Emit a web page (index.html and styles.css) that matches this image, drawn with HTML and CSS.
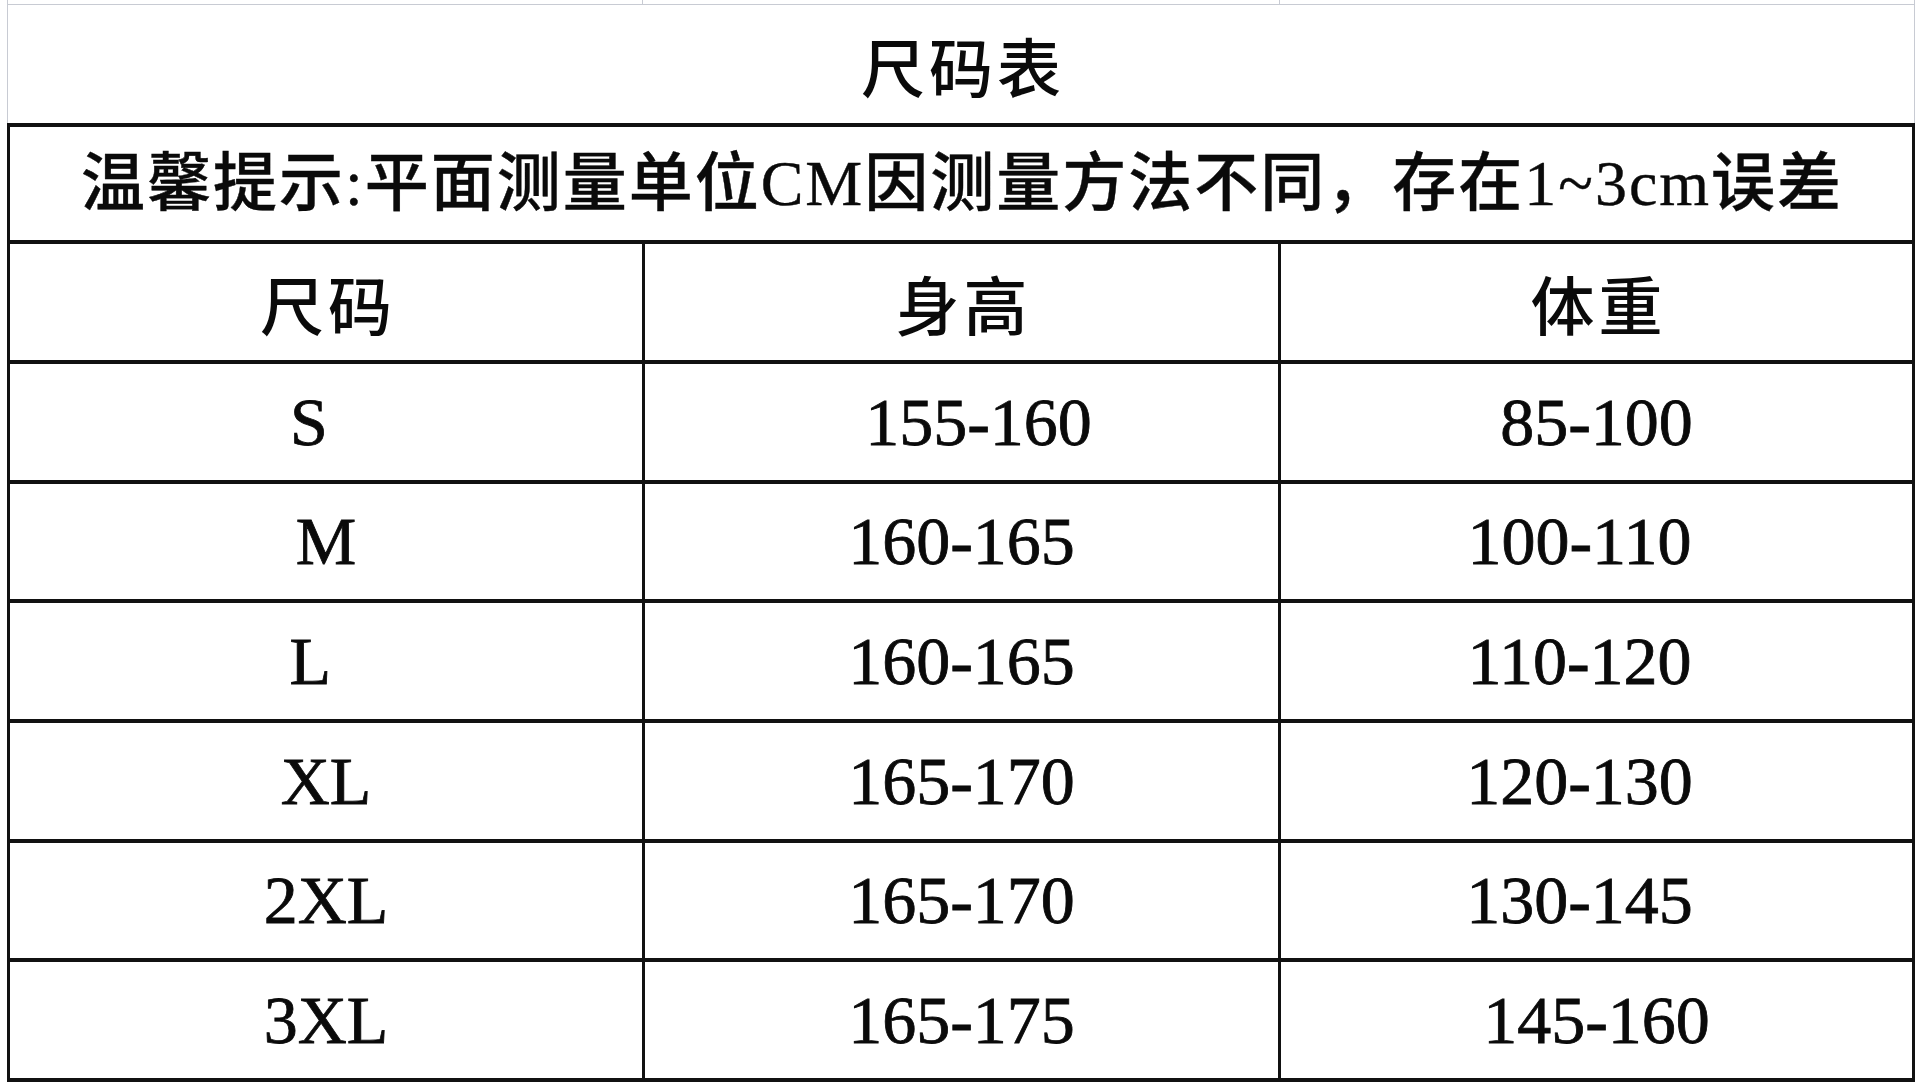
FILE: index.html
```html
<!DOCTYPE html>
<html lang="zh-CN">
<head>
<meta charset="utf-8">
<title>尺码表</title>
<link rel="stylesheet" href="styles.css">
</head>
<body>
<div class="sheet">
  <div class="gridline"><span></span><span></span><span></span></div>
  <div class="title">尺码表</div>
  <div class="chart">
    <div class="cell notice">温馨提示:平面测量单位CM因测量方法不同，存在1~3cm误差</div>

    <div class="cell head">尺码</div>
    <div class="cell head">身高</div>
    <div class="cell head">体重</div>

    <div class="cell num">S  </div>
    <div class="cell num">  155-160</div>
    <div class="cell num">85-100</div>

    <div class="cell num">M</div>
    <div class="cell num">160-165</div>
    <div class="cell num">100-110  </div>

    <div class="cell num">L  </div>
    <div class="cell num">160-165</div>
    <div class="cell num">110-120  </div>

    <div class="cell num">XL</div>
    <div class="cell num">165-170</div>
    <div class="cell num">120-130  </div>

    <div class="cell num">2XL</div>
    <div class="cell num">165-170</div>
    <div class="cell num">130-145  </div>

    <div class="cell num">3XL</div>
    <div class="cell num">165-175</div>
    <div class="cell num">145-160</div>
  </div>
</div>
</body>
</html>
```
FILE: styles.css
```css
html, body {
  margin: 0;
  padding: 0;
  background: #ffffff;
}

body {
  color: #0a0a0a;
  font-family: "Liberation Serif", "Noto Sans CJK SC", serif;
}

.sheet {
  margin-left: 7px;
  width: 1908px;
}

.gridline {
  display: grid;
  grid-template-columns: 636px 637px 635px;
  height: 4px;
  border-bottom: 1px solid #c8cbd3;
}

.gridline span {
  border-right: 1px solid #c8cbd3;
}

.gridline span:first-child {
  border-left: 1px solid #c8cbd3;
}

.title {
  box-sizing: border-box;
  height: 118px;
  border-left: 1px solid #c8cbd3;
  border-right: 1px solid #c8cbd3;
  display: flex;
  align-items: center;
  justify-content: center;
  font-family: "Noto Sans CJK SC", sans-serif;
  font-weight: 500;
  font-size: 64px;
  letter-spacing: 4px;
  padding-left: 4px;
  line-height: 1;
}

.chart {
  display: grid;
  grid-template-columns: 635px 636px 634px;
  grid-template-rows: 117px 120px repeat(6, 119.67px);
  border-left: 3px solid #111111;
  border-top: 4px solid #111111;
}

.cell {
  box-sizing: border-box;
  border-right: 3px solid #111111;
  border-bottom: 4px solid #111111;
  display: flex;
  align-items: center;
  justify-content: center;
  line-height: 1;
}

.notice {
  grid-column: 1 / -1;
  font-family: "Liberation Serif", "Noto Sans CJK SC", serif;
  font-weight: 500;
  font-size: 64px;
  letter-spacing: 2px;
  padding-left: 2px;
  -webkit-text-stroke: 0.4px #0a0a0a;
}

.head {
  font-family: "Noto Sans CJK SC", sans-serif;
  font-weight: 500;
  font-size: 64px;
  letter-spacing: 4px;
  padding-left: 4px;
}

.num {
  font-family: "Liberation Serif", serif;
  font-size: 68px;
  white-space: pre;
  -webkit-text-stroke: 0.8px #0a0a0a;
}
```
